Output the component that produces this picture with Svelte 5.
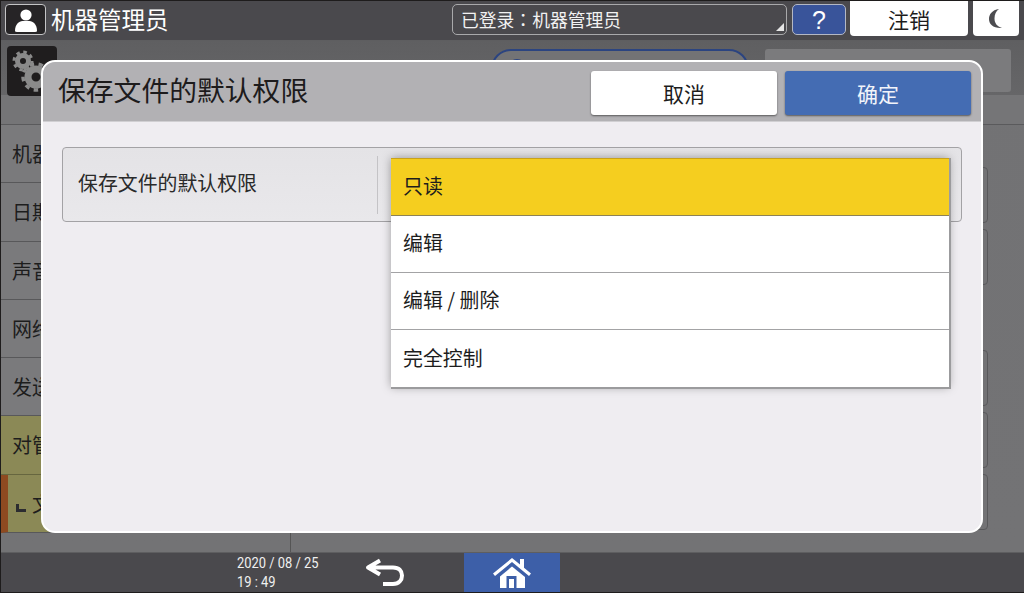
<script lang="ts">
	const sideItems = [
		{ label: '机器功能', kind: '' },
		{ label: '日期/时间', kind: '' },
		{ label: '声音', kind: '' },
		{ label: '网络', kind: '' },
		{ label: '发送', kind: '' },
		{ label: '对管理员', kind: 'group' },
		{ label: '文件', kind: 'active' }
	];
	const options = ['只读', '编辑', '编辑 / 删除', '完全控制'];
	let selected = $state(0);
</script>

<div class="screen">
	<header class="topbar">
		<div class="user-box">
			<svg viewBox="0 0 36 26" width="36" height="26">
				<circle cx="18" cy="8" r="5.6" fill="#fff" />
				<path d="M7 24 C7 17 11 14.500 14.500 14 L21.500 14 C25 14.500 29 17 29 24 Q29 25 27 25 L9 25 Q7 25 7 24 Z" fill="#fff" />
			</svg>
		</div>
		<span class="user-name">机器管理员</span>
		<div class="login-box">已登录<span class="colon">：</span>机器管理员<span class="corner"></span></div>
		<button class="help">?</button>
		<button class="logout">注销</button>
		<button class="moon" aria-label="节能">
			<svg viewBox="0 0 16 22" width="16" height="22">
				<path d="M11 1 C4 2 1 6.500 1 11 C1 16 5 20.500 14 20 C9 18.500 6.500 15 6.500 10.500 C6.500 6.500 8 3 11 1 Z" fill="#4c4c50" />
			</svg>
		</button>
	</header>

	<div class="page">
		<div class="page-head">
			<div class="gear-tile">
				<svg viewBox="0 0 50 50" width="50" height="50">
					<g fill="none" stroke="#8a8a8a">
						<circle cx="16" cy="15" r="5.500" stroke-width="5" />
						<circle cx="16" cy="15" r="9" stroke-width="3" stroke-dasharray="3.500 3.570" />
						<circle cx="29" cy="31" r="8" stroke-width="7" />
						<circle cx="29" cy="31" r="13" stroke-width="3.500" stroke-dasharray="4.500 4.570" />
					</g>
				</svg>
			</div>
			<span class="page-title">系统设置</span>
			<div class="search-pill"><span class="search-dot"></span></div>
			<div class="head-btn"></div>
		</div>
		<div class="page-body">
			<nav class="side">
				{#each sideItems as item}
					<div class="side-row {item.kind}">
						{#if item.kind === 'active'}<span class="indent"></span>{/if}{item.label}
					</div>
				{/each}
			</nav>
			<div class="rows">
				<div class="row-card"></div>
				<div class="row-card"></div>
				<div class="row-gap"></div>
				<div class="row-card"></div>
				<div class="row-card"></div>
				<div class="row-card"></div>
			</div>
		</div>
	</div>

	<footer class="bottombar">
		<div class="clock">
			<span>2020 / 08 / 25</span>
			<span>19 : 49</span>
		</div>
		<div class="back">
			<svg viewBox="0 0 40 30" width="40" height="30">
				<path d="M15 2.500 L3 9.500 L15 16.500 M3 9.500 L28 9.500 C34 9.500 37 13 37 17.500 C37 22 34 26 28 26 L18 26" fill="none" stroke="#fff" stroke-width="4" stroke-linejoin="round" />
			</svg>
		</div>
		<div class="home">
			<svg viewBox="0 0 38 32" width="38" height="32">
				<path d="M0 16.500 L19 1 L27 7.500 L27 2 L31 2 L31 10.800 L38 16.500 L36 19 L19 5 L2 19 Z" fill="#fff" />
				<path d="M7 19.500 L19 9.500 L32 20 L32 31 L7 31 Z" fill="#fff" />
				<rect x="13.500" y="19" width="10" height="12" fill="#3d5fa8" />
				<rect x="16" y="22" width="5" height="9" fill="#fff" />
			</svg>
		</div>
	</footer>

	<div class="modal">
		<div class="modal-head">
			<h1>保存文件的默认权限</h1>
			<button class="btn btn-cancel">取消</button>
			<button class="btn btn-ok">确定</button>
		</div>
		<div class="modal-body">
			<div class="setting">
				<span class="setting-label">保存文件的默认权限</span>
			</div>
			<ul class="dropdown">
				{#each options as opt, i}
					<li class:selected={selected === i}>
						<button class="option" onclick={() => (selected = i)}>{opt}</button>
					</li>
				{/each}
			</ul>
		</div>
	</div>
</div>

<style>
	:global(body) {
		margin: 0;
		background: #1e1c1c;
	}

	.screen {
		position: relative;
		width: 1024px;
		height: 593px;
		box-sizing: border-box;
		padding: 1px 0 1px 1px;
		display: flex;
		flex-direction: column;
		overflow: hidden;
		background: #1e1c1c;
		font-family: 'Noto Sans CJK SC', 'Noto Sans', sans-serif;
	}

	button {
		font-family: inherit;
		border: none;
		padding: 0;
	}

	.topbar {
		height: 39px;
		flex: none;
		display: flex;
		align-items: flex-start;
		background: #4a494d;
		color: #fff;
		border-bottom: 1px solid #5e5e60;
	}

	.user-box {
		width: 41px;
		height: 31px;
		box-sizing: border-box;
		margin: 3px 0 0 4px;
		border: 1px solid #c4c4c6;
		border-radius: 4px;
		background: #262426;
		display: flex;
		align-items: center;
		justify-content: center;
	}

	.user-name {
		margin-left: 5px;
		font-size: 23.500px;
		line-height: 37px;
		width: 401px;
	}

	.login-box {
		position: relative;
		width: 335px;
		height: 31px;
		margin-top: 3px;
		box-sizing: border-box;
		padding-left: 8px;
		border: 1px solid #a9a9ab;
		border-radius: 5px;
		font-size: 17.800px;
		line-height: 28px;
		color: #f2f2f2;
	}

	.colon {
		font-family: 'Noto Sans CJK TC', sans-serif;
	}

	.corner {
		position: absolute;
		right: 2px;
		bottom: 3px;
		width: 0;
		height: 0;
		border-left: 8px solid transparent;
		border-bottom: 8px solid #e6e6e6;
	}

	.help {
		width: 54px;
		height: 31px;
		margin: 3px 0 0 5px;
		border: 1px solid #b4b8c4;
		border-radius: 5px;
		background: #39549a;
		color: #fff;
		font-family: 'Liberation Sans', sans-serif;
		font-size: 25px;
		line-height: 28px;
	}

	.logout {
		width: 118px;
		height: 35px;
		margin-left: 4px;
		border-radius: 0 0 4px 4px;
		background: #fff;
		color: #1c1c1c;
		font-size: 21px;
	}

	.moon {
		width: 46px;
		height: 35px;
		margin-left: 5px;
		border-radius: 0 0 4px 4px;
		background: #fff;
		display: flex;
		align-items: center;
		justify-content: center;
	}

	.page {
		flex: 1;
		min-height: 0;
		display: flex;
		flex-direction: column;
		background: linear-gradient(#727274, #737375);
	}

	.page-head {
		height: 84px;
		flex: none;
		box-sizing: border-box;
		display: flex;
		align-items: flex-start;
		padding: 5px 11px 0 6px;
		background: linear-gradient(#5f5f61, #666668 65%, #757577 65%);
		border-bottom: 1px solid #5a5a5c;
	}

	.gear-tile {
		width: 50px;
		height: 50px;
		flex: none;
		border-radius: 4px;
		background: #1f1d1e;
	}

	.page-title {
		margin: 12px 0 0 15px;
		width: 419px;
		flex: none;
		font-size: 24px;
		line-height: 30px;
		color: #222;
	}

	.search-pill {
		width: 258px;
		height: 43px;
		flex: none;
		margin-top: 3px;
		box-sizing: border-box;
		padding: 8px 0 0 16px;
		border: 2px solid #2b4480;
		border-radius: 20px;
		background: #737375;
	}

	.search-dot {
		display: block;
		width: 16px;
		height: 16px;
		border-radius: 50%;
		background: #2b4480;
	}

	.head-btn {
		width: 246px;
		height: 43px;
		flex: none;
		margin: 3px 0 0 16px;
		border-radius: 3px;
		background: #7b7b7d;
	}

	.page-body {
		flex: 1;
		min-height: 0;
		display: flex;
	}

	.side {
		width: 289px;
		flex: none;
		display: flex;
		flex-direction: column;
		border-right: 1px solid #555;
	}

	.side-row {
		height: 58.300px;
		flex: none;
		box-sizing: border-box;
		padding-left: 11px;
		font-size: 20px;
		line-height: 57px;
		white-space: nowrap;
		color: #1d1d1d;
		background: #7a7a7c;
		border-bottom: 1px solid #58585a;
	}

	.side-row.group {
		background: #8b8956;
		border-bottom-color: #66663f;
	}

	.side-row.active {
		background: #8b8956;
		border-left: 7px solid #8e4a20;
		padding-left: 8px;
		border-bottom-color: #58585a;
	}

	.indent {
		display: inline-block;
		width: 7px;
		height: 5px;
		margin-right: 6px;
		border-left: 3px solid #2c2c30;
		border-bottom: 3px solid #2c2c30;
	}

	.rows {
		flex: 1;
		display: flex;
		flex-direction: column;
		gap: 6px;
		padding: 42px 36px 0 0;
		align-items: flex-end;
	}

	.row-card {
		width: 600px;
		height: 56px;
		flex: none;
		box-sizing: border-box;
		border: 1px solid #59595b;
		border-radius: 4px;
		background: #737375;
	}

	.row-gap {
		height: 53px;
		flex: none;
	}

	.bottombar {
		height: 40px;
		flex: none;
		display: flex;
		align-items: center;
		box-sizing: border-box;
		background: #4a494d;
		border-top: 1px solid #5e5e60;
		color: #f0f0f0;
	}

	.clock {
		margin-left: 236px;
		width: 128px;
		flex: none;
		display: flex;
		flex-direction: column;
		font-family: 'Roboto', sans-serif;
		font-size: 15px;
		line-height: 19px;
		transform: scaleX(0.86);
		transform-origin: left;
	}

	.back {
		width: 99px;
		flex: none;
		display: flex;
	}

	.home {
		width: 96px;
		height: 100%;
		flex: none;
		display: flex;
		align-items: center;
		justify-content: center;
		background: #3d5fa8;
	}

	.modal {
		position: absolute;
		left: 41px;
		top: 60px;
		width: 942px;
		height: 473px;
		box-sizing: border-box;
		display: flex;
		flex-direction: column;
		overflow: hidden;
		border: 2px solid #fff;
		border-radius: 14px;
		background: #efedf1;
	}

	.modal-head {
		height: 60px;
		flex: none;
		display: flex;
		align-items: flex-start;
		background: #b2b1b4;
		border-bottom: 1px solid #d0cfd2;
		box-sizing: border-box;
	}

	h1 {
		margin: 0 0 0 15px;
		width: 533px;
		flex: none;
		font-size: 27.800px;
		font-weight: 400;
		line-height: 55px;
		white-space: nowrap;
		color: #1d1b1c;
	}

	.btn {
		width: 186px;
		height: 44px;
		margin-top: 9px;
		border-radius: 3px;
		font-size: 21px;
		box-shadow: 0 1px 2px rgba(0, 0, 0, 0.5);
	}

	.btn-cancel {
		background: #fff;
		color: #1c1c1c;
	}

	.btn-ok {
		margin-left: 8px;
		background: #446cb3;
		color: #f2f4fa;
	}

	.modal-body {
		position: relative;
		flex: 1;
		padding: 25px 19px 0;
	}

	.setting {
		height: 75px;
		box-sizing: border-box;
		display: flex;
		align-items: center;
		border: 1px solid #a3a2a5;
		border-radius: 4px;
		padding-left: 15px;
		background: linear-gradient(#e4e3e6, #e9e8eb);
		font-size: 19.900px;
		color: #2a2a2a;
	}

	.setting-label {
		width: 299px;
		height: 58px;
		line-height: 54px;
		white-space: nowrap;
		border-right: 1px solid #c4c3c6;
	}

	.dropdown {
		position: absolute;
		left: 348px;
		top: 36px;
		width: 558px;
		margin: 0;
		padding: 0;
		list-style: none;
		background: #fff;
		box-shadow:
			1px 1px 0 1px #9b9b9d,
			0 0 9px rgba(0, 0, 0, 0.35);
	}

	.dropdown li {
		height: 57px;
		box-sizing: border-box;
		border-bottom: 1px solid #a3a3a5;
	}

	.dropdown li:last-child {
		border-bottom: none;
	}

	.dropdown li.selected {
		height: 58px;
		background: #f5ce1f;
		border-top: 1px solid #c9a21a;
		border-bottom-color: #8d8255;
	}

	.option {
		width: 100%;
		height: 100%;
		padding: 0 0 3px 12px;
		background: none;
		text-align: left;
		font-size: 19.900px;
		color: #1d1d1d;
	}
</style>
